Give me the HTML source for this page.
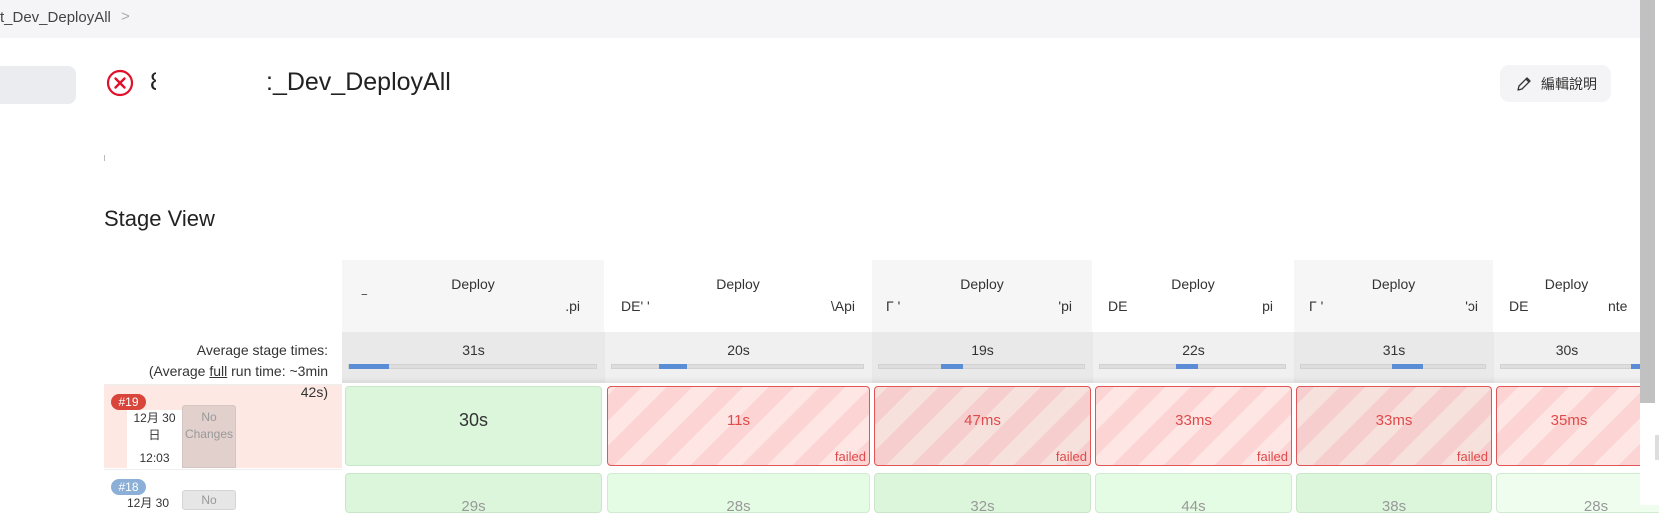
<!DOCTYPE html>
<html><head><meta charset="utf-8"><style>
*{margin:0;padding:0;box-sizing:border-box}
body{width:1659px;height:505px;overflow:hidden;background:#fff;font-family:"Liberation Sans","Noto Sans CJK TC",sans-serif;color:#333;position:relative}
.a{position:absolute}
.bc{left:0;top:0;width:1640px;height:38px;background:#f5f5f7;font-size:15px;color:#444}
.hd{top:260px;height:72px;text-align:center;font-size:14px;color:#333;border-right:1px solid #fff}
.hd .t{position:absolute;left:0;right:0;top:16px;line-height:16px}
.hd span{top:38px}
.av{top:332px;height:51px;text-align:center;font-size:14px;color:#333;box-shadow:inset 0 -6px 6px -4px rgba(0,0,0,.08)}
.bar{position:absolute;left:6px;right:8px;top:32px;height:5px;background:#ddd;border:1px solid #d2d2d2}
.bar i{position:absolute;top:-1px;height:5px;background:#5b8dd6}
.cell{top:386px;height:80px;border-radius:4px;text-align:center;font-size:15px}
.ok{background:#dcf6dc;border:1px solid #c9e6c9;color:#333}
.bad{border:1px solid #e05555;color:#e04a4a;background:repeating-linear-gradient(-45deg,#fcd4d4 0 18px,#fde6e4 18px 36px)}
.bad2{border:1px solid #e05555;color:#e04a4a;background:repeating-linear-gradient(-45deg,#f6cece 0 18px,#f7e1dd 18px 36px)}
.cell .v{position:absolute;left:0;right:0;top:25px}
.cell .f{position:absolute;right:3px;bottom:1px;font-size:13px}
.c2{top:473px;height:40px;border-radius:4px;text-align:center;color:#999;font-size:15px;padding-top:24px}
</style></head><body>
<div class="a bc"><span style="position:absolute;left:0;top:9px">t_Dev_DeployAll</span><span style="position:absolute;left:121px;top:8px;color:#aaa">&gt;</span></div>
<div class="a" style="left:0;top:66px;width:76px;height:38px;background:#ebecf0;border-radius:0 8px 8px 0"></div>
<svg class="a" style="left:106px;top:69px" width="28" height="28" viewBox="0 0 28 28"><circle cx="14" cy="14" r="12" fill="none" stroke="#e0102a" stroke-width="2.2"/><path d="M9.5 9.5L18.5 18.5M18.5 9.5L9.5 18.5" stroke="#e0102a" stroke-width="2.4" stroke-linecap="round"/></svg>
<div class="a" style="left:150px;top:68px;width:6px;overflow:hidden;font-size:25px;color:#222">8</div>
<div class="a" style="left:266px;top:68px;font-size:25px;color:#222">:_Dev_DeployAll</div>
<div class="a" style="left:1500px;top:65px;width:111px;height:37px;background:#f4f4f6;border-radius:9px"></div>
<svg class="a" style="left:1516px;top:76px" width="16" height="16" viewBox="0 0 16 16"><path d="M2 14l1-4 8-8 3 3-8 8z M10 3l3 3" fill="none" stroke="#333" stroke-width="1.3" stroke-linejoin="round"/></svg>
<div class="a" style="left:1541px;top:74px;font-size:14px;color:#333">編輯說明</div>
<div class="a" style="left:104px;top:155px;width:1px;height:6px;background:#bbb"></div>
<div class="a" style="left:104px;top:206px;font-size:22px;color:#222">Stage View</div>

<div class="a" style="left:104px;top:384px;width:238px;height:84px;background:#fde8e4;border-top:1px solid #eee"></div>
<div class="a" style="left:104px;top:340px;width:224px;text-align:right;font-size:14px;line-height:21px;color:#333">Average stage times:<br>(Average <u>full</u> run time: ~3min<br>42s)</div>
<div class="a" style="left:111px;top:394px;width:35px;height:16px;border-radius:8px;background:#d9453b;color:#fff;font-size:12px;text-align:center;line-height:16px">#19</div>
<div class="a" style="left:127px;top:410px;width:55px;height:58px;background:#fff;font-size:12px;text-align:center;line-height:17px;color:#333">12月 30<br>日<br><span style="position:relative;top:6px">12:03</span></div>
<div class="a" style="left:182px;top:405px;width:54px;height:63px;background:#e2d0cd;border:1px solid #d4c4c2;border-radius:3px 3px 0 0;font-size:12px;color:#999;text-align:center;line-height:17px;padding-top:3px">No<br>Changes</div>
<div class="a" style="left:104px;top:469px;width:238px;height:40px;background:#fff;border-top:1px solid #eee"></div>
<div class="a" style="left:111px;top:479px;width:35px;height:16px;border-radius:8px;background:#8bafd6;color:#fff;font-size:12px;text-align:center;line-height:16px">#18</div>
<div class="a" style="left:127px;top:494px;font-size:12px;color:#333">12月 30</div>
<div class="a" style="left:182px;top:490px;width:54px;height:20px;background:#e6e6e6;border:1px solid #d4d4d4;border-radius:3px;font-size:12px;color:#999;text-align:center;padding-top:2px">No</div>

<div class="a hd" style="left:342px;width:263px;background:#f6f6f6"><div class="t">Deploy</div><span class="a" style="right:24px">.pi</span><span class="a" style="left:20px;top:32px">‾</span></div>
<div class="a hd" style="left:605px;width:267px;background:#fff"><div class="t">Deploy</div><span class="a" style="left:16px">DE' '</span><span class="a" style="right:16px">\Api</span></div>
<div class="a hd" style="left:872px;width:221px;background:#f6f6f6"><div class="t">Deploy</div><span class="a" style="left:14px">Γ '</span><span class="a" style="right:20px">'pi</span></div>
<div class="a hd" style="left:1093px;width:201px;background:#fff"><div class="t">Deploy</div><span class="a" style="left:15px">DE</span><span class="a" style="right:20px">pi</span></div>
<div class="a hd" style="left:1294px;width:200px;background:#f6f6f6"><div class="t">Deploy</div><span class="a" style="left:15px">Γ '</span><span class="a" style="right:15px">'ɔi</span></div>
<div class="a hd" style="left:1494px;width:200px;background:#fff"><div class="t" style="left:-54px">Deploy</div><span class="a" style="left:15px">DE</span><span class="a" style="left:114px">nte</span></div>

<div class="a av" style="left:342px;width:263px;background:#e9e9e9"><div style="padding-top:10px">31s</div><div class="bar"><i style="left:0;width:40px"></i></div></div>
<div class="a av" style="left:605px;width:267px;background:#f0f0f0"><div style="padding-top:10px">20s</div><div class="bar"><i style="left:47px;width:28px"></i></div></div>
<div class="a av" style="left:872px;width:221px;background:#e9e9e9"><div style="padding-top:10px">19s</div><div class="bar"><i style="left:62px;width:22px"></i></div></div>
<div class="a av" style="left:1093px;width:201px;background:#f0f0f0"><div style="padding-top:10px">22s</div><div class="bar"><i style="left:76px;width:22px"></i></div></div>
<div class="a av" style="left:1294px;width:200px;background:#e9e9e9"><div style="padding-top:10px">31s</div><div class="bar"><i style="left:91px;width:31px"></i></div></div>
<div class="a av" style="left:1494px;width:200px;background:#f0f0f0"><div style="padding-top:10px;margin-left:-54px">30s</div><div class="bar"><i style="left:130px;width:20px"></i></div></div>

<div class="a cell ok" style="left:345px;width:257px"><div class="v" style="font-size:18px;top:23px">30s</div></div>
<div class="a cell bad" style="left:607px;width:263px"><div class="v">11s</div><div class="f">failed</div></div>
<div class="a cell bad2" style="left:874px;width:217px"><div class="v">47ms</div><div class="f">failed</div></div>
<div class="a cell bad" style="left:1095px;width:197px"><div class="v">33ms</div><div class="f">failed</div></div>
<div class="a cell bad2" style="left:1296px;width:196px"><div class="v">33ms</div><div class="f">failed</div></div>
<div class="a cell bad" style="left:1496px;width:200px"><div class="v" style="left:-54px">35ms</div></div>

<div class="a c2" style="left:345px;width:257px;background:#dcf6dc;border:1px solid #c9e6c9">29s</div>
<div class="a c2" style="left:607px;width:263px;background:#e4fbe4;border:1px solid #d0ebd0">28s</div>
<div class="a c2" style="left:874px;width:217px;background:#dcf6dc;border:1px solid #c9e6c9">32s</div>
<div class="a c2" style="left:1095px;width:197px;background:#e4fbe4;border:1px solid #d0ebd0">44s</div>
<div class="a c2" style="left:1296px;width:196px;background:#dcf6dc;border:1px solid #c9e6c9">38s</div>
<div class="a c2" style="left:1496px;width:200px;background:#eefdee;border:1px solid #d0ebd0">28s</div>

<div class="a" style="left:1640px;top:0;width:19px;height:505px;background:#fff"></div>
<div class="a" style="left:1640px;top:0;width:15px;height:403px;background:#c1c1c1"></div>
<div class="a" style="left:1655px;top:435px;width:4px;height:25px;background:#ddd"></div>
</body></html>
